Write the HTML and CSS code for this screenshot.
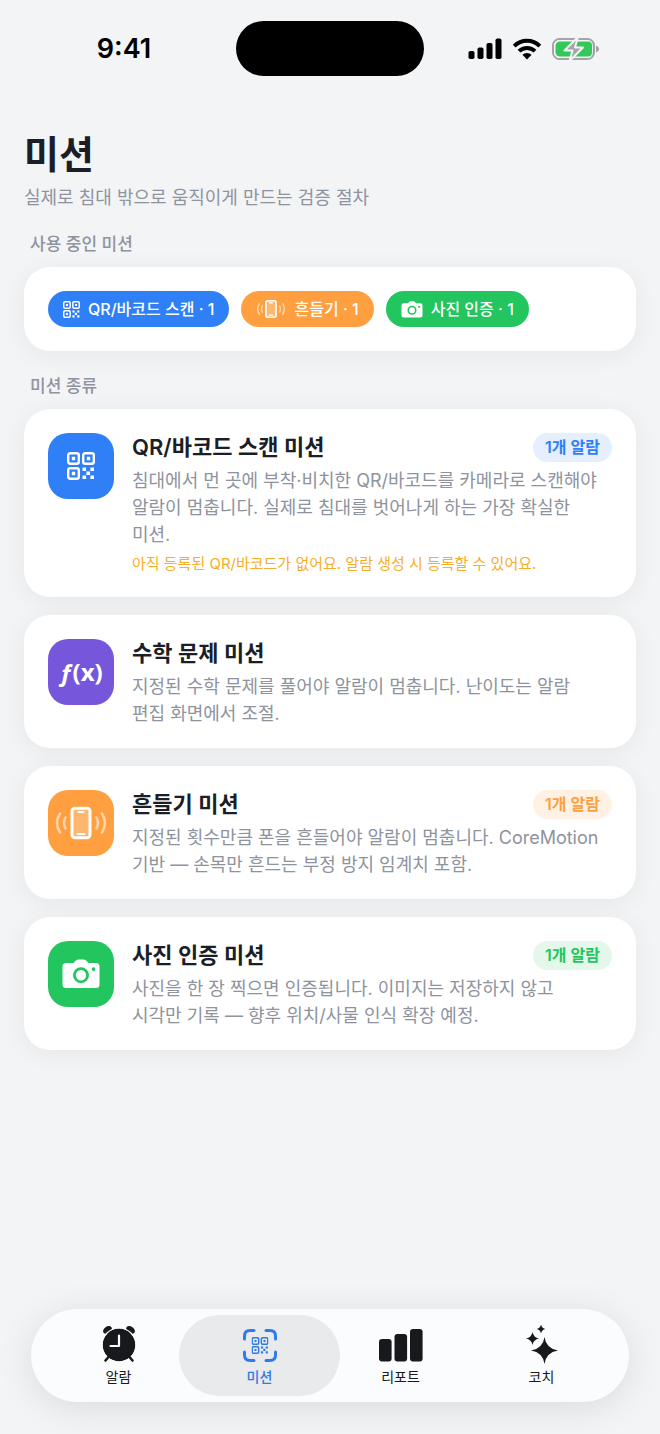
FILE: index.html
```html
<!DOCTYPE html>
<html lang="ko">
<head>
    <meta charset="UTF-8">
    <meta name="viewport" content="width=device-width, initial-scale=1.0">
    <title>미션</title>
    <link rel="stylesheet" href="styles.css">
</head>
<body>
    <!-- shared icons -->
    <svg class="sprite" aria-hidden="true">
        <symbol id="icon-qr" viewBox="0 0 28 28">
            <g fill="none" stroke="currentColor" stroke-width="2.4">
                <rect x="1.2" y="1.2" width="10.6" height="10.6" rx="2"/>
                <rect x="16.2" y="1.2" width="10.6" height="10.6" rx="2"/>
                <rect x="1.2" y="16.2" width="10.6" height="10.6" rx="2"/>
            </g>
            <path fill="currentColor" d="M4.8 4.8h3.4v3.4H4.8zM19.8 4.8h3.4v3.4h-3.4zM4.8 19.8h3.4v3.4H4.8zM15.5 15.5h3.6v3.6h-3.6zM23.4 15.5H27v3.6h-3.6zM19.4 19.4H23V23h-3.6zM15.5 23.4h3.6V27h-3.6zM23.4 23.4H27V27h-3.6z"/>
        </symbol>
        <symbol id="icon-shake" viewBox="0 0 52 36">
            <rect x="17" y="3.2" width="18" height="29.6" rx="3" fill="currentColor" fill-opacity=".25" stroke="currentColor" stroke-width="3"/>
            <path d="M23.5 7h5M22.5 29h7" stroke="currentColor" stroke-width="2" stroke-linecap="round"/>
            <g fill="none" stroke="currentColor" stroke-width="2.6" stroke-linecap="round" opacity=".55">
                <path d="M10.5 12.5q-3 5.5 0 11M5 8.5q-6 9.5 0 19M41.5 12.5q3 5.5 0 11M47 8.5q6 9.5 0 19"/>
            </g>
        </symbol>
        <symbol id="icon-camera" viewBox="0 0 38 30">
            <path fill="currentColor" fill-rule="evenodd" d="M4 4h7.5l2.7-2.7Q15.4.5 16.5.5h5q1.2 0 2.3.8L26.5 4H34q3.5 0 3.5 3.5v18q0 3.5-3.5 3.5H4Q.5 29 .5 25.5v-18Q.5 4 4 4zM19 8.2a8 8 0 1 0 0 16 8 8 0 0 0 0-16zM31.5 8.2a1.9 1.9 0 1 0 0 3.8 1.9 1.9 0 0 0 0-3.8z"/>
            <circle cx="19" cy="16.2" r="5.2" fill="currentColor"/>
        </symbol>
    </svg>

    <div class="app">
        <header class="status-bar">
            <time class="clock">9:41</time>
            <div class="island"></div>
            <div class="indicators">
                <svg width="34" height="22" viewBox="0 0 34 22" aria-label="신호">
                    <rect x="0.5" y="13" width="6" height="8" rx="1.8"/>
                    <rect x="9.5" y="9.5" width="6" height="11.5" rx="1.8"/>
                    <rect x="18.5" y="5" width="6" height="16" rx="1.8"/>
                    <rect x="27.5" y="0.5" width="6" height="20.5" rx="1.8"/>
                </svg>
                <svg width="30" height="22" viewBox="0 0 30 22" aria-label="Wi-Fi">
                    <g fill="none" stroke="#000" stroke-width="4">
                        <path d="M2.2 8.2a18 18 0 0 1 25.6 0"/>
                        <path d="M7 13.2a11.3 11.3 0 0 1 16 0"/>
                    </g>
                    <path d="M15 21.5l-4.6-4.7a6.5 6.5 0 0 1 9.2 0z"/>
                </svg>
                <svg width="48" height="24" viewBox="0 0 48 24" aria-label="배터리">
                    <rect x="1" y="2" width="41" height="20" rx="6.5" fill="none" stroke="#a4a5a9" stroke-width="2"/>
                    <path d="M44 8.5q3.2 1.3 3.2 3.5T44 15.5z" fill="#a4a5a9"/>
                    <rect x="3.5" y="4.5" width="38" height="15" rx="4.5" fill="#34c759"/>
                    <rect x="2.5" y="3.5" width="38" height="17" rx="5" fill="none" stroke="#f2f4f6" stroke-width="1"/>
                    <path d="M26 0L12.5 13.5h8L17.5 24 31 10.5h-8z" fill="#a4a5a9" stroke="#f2f4f6" stroke-width="2" stroke-linejoin="round"/>
                </svg>
            </div>
        </header>

        <main>
            <h1>미션</h1>
            <p class="subtitle">실제로 침대 밖으로 움직이게 만드는 검증 절차</p>

            <h2>사용 중인 미션</h2>
            <div class="card chips">
                <span class="chip blue"><svg width="17" height="17"><use href="#icon-qr"/></svg>QR/바코드 스캔 · 1</span>
                <span class="chip orange"><svg width="30" height="20"><use href="#icon-shake"/></svg>흔들기 · 1</span>
                <span class="chip green"><svg width="22" height="17"><use href="#icon-camera"/></svg>사진 인증 · 1</span>
            </div>

            <h2>미션 종류</h2>
            <div class="mission-list">
                <article class="card mission">
                    <div class="tile blue"><svg width="28" height="28"><use href="#icon-qr"/></svg></div>
                    <div class="mission-body">
                        <div class="mission-head">
                            <h3>QR/바코드 스캔 미션</h3>
                            <span class="badge badge-blue">1개 알람</span>
                        </div>
                        <p>침대에서 먼 곳에 부착·비치한 QR/바코드를 카메라로 스캔해야 알람이 멈춥니다. 실제로 침대를 벗어나게 하는 가장 확실한 미션.</p>
                        <p class="warning">아직 등록된 QR/바코드가 없어요. 알람 생성 시 등록할 수 있어요.</p>
                    </div>
                </article>

                <article class="card mission">
                    <div class="tile purple"><span class="fx"><i>ƒ</i>(x)</span></div>
                    <div class="mission-body">
                        <div class="mission-head">
                            <h3>수학 문제 미션</h3>
                        </div>
                        <p>지정된 수학 문제를 풀어야 알람이 멈춥니다. 난이도는 알람 편집 화면에서 조절.</p>
                    </div>
                </article>

                <article class="card mission">
                    <div class="tile orange"><svg width="52" height="36"><use href="#icon-shake"/></svg></div>
                    <div class="mission-body">
                        <div class="mission-head">
                            <h3>흔들기 미션</h3>
                            <span class="badge badge-orange">1개 알람</span>
                        </div>
                        <p>지정된 횟수만큼 폰을 흔들어야 알람이 멈춥니다. CoreMotion 기반 — 손목만 흔드는 부정 방지 임계치 포함.</p>
                    </div>
                </article>

                <article class="card mission">
                    <div class="tile green"><svg width="38" height="30"><use href="#icon-camera"/></svg></div>
                    <div class="mission-body">
                        <div class="mission-head">
                            <h3>사진 인증 미션</h3>
                            <span class="badge badge-green">1개 알람</span>
                        </div>
                        <p>사진을 한 장 찍으면 인증됩니다. 이미지는 저장하지 않고 시각만 기록 — 향후 위치/사물 인식 확장 예정.</p>
                    </div>
                </article>
            </div>
        </main>

        <nav class="tab-bar">
            <a href="#alarm">
                <svg width="36" height="40" viewBox="0 0 36 40">
                    <circle cx="18" cy="19" r="16.4"/>
                    <ellipse cx="6.5" cy="4" rx="4.8" ry="3.4" transform="rotate(-35 6.5 4)"/>
                    <ellipse cx="29.5" cy="4" rx="4.8" ry="3.4" transform="rotate(35 29.5 4)"/>
                    <circle cx="18" cy="19" r="17" fill="none" stroke="#fbfcfe" stroke-width="1.2"/>
                    <path d="M7.5 31l-3 3.5M28.5 31l3 3.5" stroke="currentColor" stroke-width="2.6" stroke-linecap="round"/>
                    <path d="M18 9.5V20H9.5" fill="none" stroke="#fbfcfe" stroke-width="2.2" stroke-linecap="round" stroke-linejoin="round"/>
                </svg>
                알람
            </a>
            <a href="#mission" class="active" aria-current="page">
                <svg width="36" height="40" viewBox="0 0 36 40">
                    <path d="M2.5 13V10q0-5.5 5.5-5.5h4M24 4.5h4q5.5 0 5.5 5.5v3M33.5 26v3q0 5.5-5.5 5.500h-4M12 34.500H8q-5.500 0-5.500-5.500v-3" fill="none" stroke="currentColor" stroke-width="3" stroke-linecap="round"/>
                    <use href="#icon-qr" x="9.5" y="11" width="17" height="17"/>
                </svg>
                미션
            </a>
            <a href="#report">
                <svg width="44" height="40" viewBox="0 0 44 40">
                    <rect y="13" width="12.6" height="22.5" rx="3"/>
                    <rect x="15.5" y="8" width="12.6" height="27.5" rx="3"/>
                    <rect x="31" y="3" width="12.6" height="32.5" rx="3"/>
                </svg>
                리포트
            </a>
            <a href="#coach">
                <svg width="36" height="42" viewBox="0 0 36 42">
                    <path d="M20.500 13q1.500 11.500 13.500 13.500-12 2-13.500 13.500Q19 28.500 7 26.500 19 24.500 20.500 13zM8.500 8q1 5.500 6.500 6.500-5.500 1-6.500 6.500-1-5.500-6.500-6.500 5.500-1 6.500-6.500zM17 .5q.8 3.700 4.500 4.500-3.700.8-4.500 4.500-.8-3.700-4.500-4.500 3.700-.8 4.500-4.500z"/>
                </svg>
                코치
            </a>
        </nav>
    </div>
</body>
</html>
```

FILE: styles.css
```css
* {
    box-sizing: border-box;
}
body {
    margin: 0;
    background-color: #f2f4f6;
    color: #1b1e27;
    font-family: Inter, "Noto Sans CJK KR", sans-serif;
    word-break: keep-all;
}
h1, h2, h3, p {
    margin: 0;
}
.sprite {
    position: absolute;
    width: 0;
    height: 0;
}
.app {
    display: flex;
    flex-direction: column;
    min-height: 100vh;
    padding: 0 24px 32px;
}

/* status bar */
.status-bar {
    display: grid;
    grid-template-columns: 1fr 188px 1fr;
    align-items: center;
    padding-top: 21px;
    color: #000;
}
.clock {
    padding-right: 12px;
    text-align: center;
    font-size: 27px;
    font-weight: 600;
}
.island {
    height: 55px;
    border-radius: 28px;
    background: #000;
}
.indicators {
    display: flex;
    align-items: center;
    justify-content: center;
    gap: 10px;
    padding-left: 8px;
}

/* headings */
main {
    padding-top: 52px;
}
h1 {
    font-size: 38px;
    font-weight: 600;
    line-height: 52px;
}
.subtitle {
    color: #8e939d;
    font-size: 18px;
    line-height: 36px;
}
h2 {
    padding: 21px 6px 9px;
    color: #8e939d;
    font-size: 17px;
    font-weight: 500;
    line-height: 28px;
}
.subtitle + h2 {
    padding-top: 14px;
}

/* cards */
.card {
    padding: 24px;
    border-radius: 26px;
    background: #fff;
    box-shadow: 0 4px 24px rgba(0, 0, 0, 0.06);
}
.chips {
    display: flex;
    flex-wrap: wrap;
    align-items: center;
    gap: 12px;
}
.chip {
    display: flex;
    align-items: center;
    gap: 8px;
    height: 36px;
    padding: 0 15px;
    border-radius: 18px;
    color: #fff;
    font-size: 16px;
    font-weight: 500;
    line-height: 20px;
}
.blue {
    background: #2f80f7;
}
.orange {
    background: #ff9f40;
}
.green {
    background: #22c55e;
}
.purple {
    background: #7657dc;
}
.mission-list {
    display: flex;
    flex-direction: column;
    gap: 18px;
}
.mission {
    display: flex;
    align-items: flex-start;
    gap: 18px;
    padding-bottom: 21px;
}
.tile {
    display: flex;
    flex: none;
    align-items: center;
    justify-content: center;
    width: 66px;
    height: 66px;
    border-radius: 20px;
    color: #fff;
}
.fx {
    font-family: "Open Sans", sans-serif;
    font-size: 24px;
    font-weight: 700;
    line-height: 28px;
}
.mission-body {
    flex: 1;
}
.mission-head {
    display: flex;
    align-items: flex-start;
    justify-content: space-between;
    height: 29px;
    margin-bottom: 5px;
}
.mission h3 {
    font-size: 22px;
    font-weight: 600;
    line-height: 28px;
}
.mission p {
    padding-right: 4px;
    color: #8e939d;
    font-size: 18px;
    line-height: 27px;
}
.mission .warning {
    margin-top: 4px;
    color: #f9ae2b;
    font-size: 15px;
    line-height: 24px;
}
.badge {
    padding: 0 12px;
    border-radius: 15px;
    font-size: 16px;
    font-weight: 600;
    line-height: 29px;
}
.badge-blue {
    background: #e5effe;
    color: #2f80f7;
}
.badge-orange {
    background: #fff2e5;
    color: #ff9f40;
}
.badge-green {
    background: #e3f8eb;
    color: #22c55e;
}

/* bottom tabs */
.tab-bar {
    display: flex;
    margin: auto 7px 0;
    padding: 6px 17px;
    border-radius: 47px;
    background: #fbfcfe;
    box-shadow: 0 6px 36px rgba(0, 0, 0, 0.1);
}
.tab-bar a {
    display: flex;
    flex: 1;
    flex-direction: column;
    align-items: center;
    justify-content: flex-end;
    height: 81px;
    margin: 0 -10px;
    padding-bottom: 8px;
    border-radius: 41px;
    color: #17191c;
    font-size: 14px;
    font-weight: 400;
    line-height: 22px;
    text-decoration: none;
}
.tab-bar .active {
    background: #e8eaec;
    color: #2f7be9;
    font-weight: 500;
}
.tab-bar svg {
    fill: currentColor;
}
```
